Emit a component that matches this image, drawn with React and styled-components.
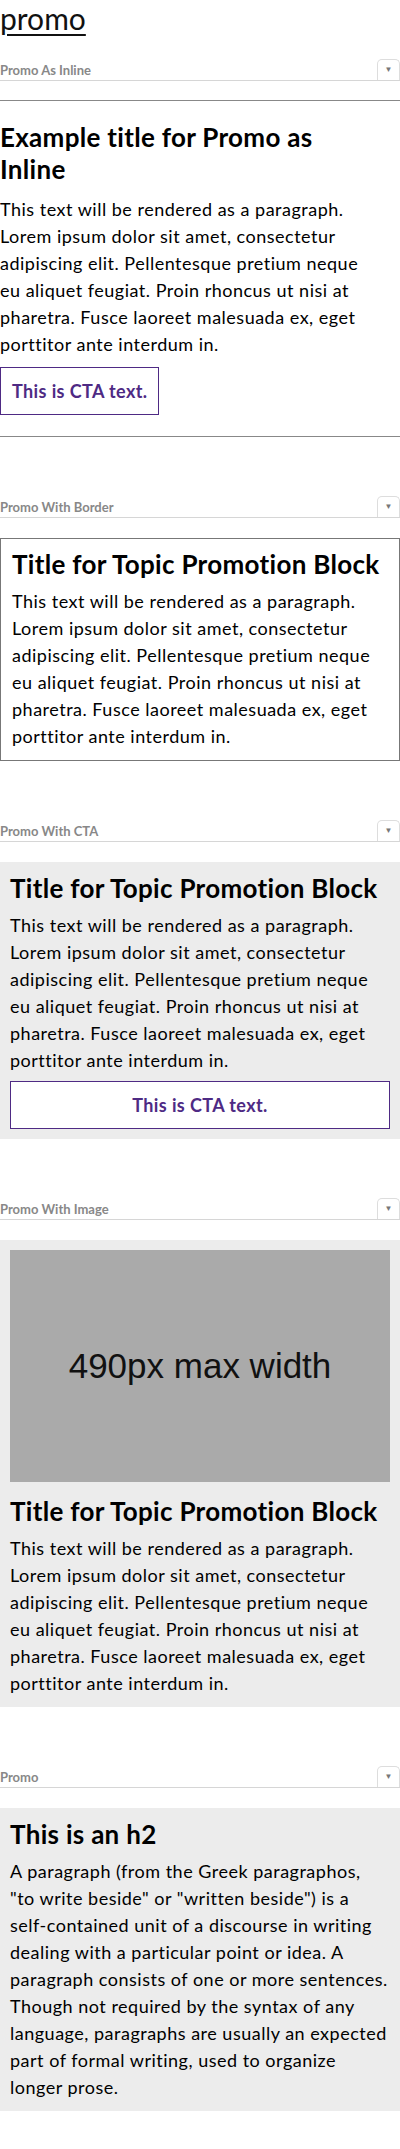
import React from 'react';
import styled, { createGlobalStyle } from 'styled-components';

const GlobalStyle = createGlobalStyle`
  body {
    margin: 0;
    background: #fff;
    font-family: Lato, "Open Sans", sans-serif;
    color: #000;
  }
`;

const Page = styled.div`
  width: 400px;
  padding-bottom: 41px;
`;

const PageTitle = styled.h1`
  margin: 0;
  font-size: 30px;
  font-weight: 400;
  line-height: 37px;

  a {
    color: #111;
    text-decoration: underline;
    text-decoration-thickness: 2px;
    text-underline-offset: 4px;
  }
`;

const Section = styled.section`
  margin-top: ${p => (p.$first ? '22px' : '59px')};
`;

const SectionHeader = styled.div`
  display: flex;
  justify-content: space-between;
  align-items: center;
  height: 21px;
  border-bottom: 1px solid #d6d6d6;
  margin-bottom: 20px;
`;

const SectionLabel = styled.span`
  font-size: 13px;
  font-weight: 700;
  color: #888;
`;

const Toggle = styled.button`
  align-self: flex-end;
  width: 23px;
  height: 21px;
  padding: 0;
  background: #fff;
  border: 1px solid #ddd;
  border-bottom: none;
  border-radius: 5px 5px 0 0;
  color: #777;
  font-size: 8px;
  line-height: 20px;
  cursor: pointer;
`;

const InlinePromo = styled.div`
  margin-top: -1px;
  border-top: 1px solid #888;
  border-bottom: 1px solid #888;
  padding: 20px 20px 21px 0;
`;

const Box = styled.div`
  background: ${p => (p.$gray ? '#ececec' : '#fff')};
  border: ${p => (p.$bordered ? '1px solid #777' : 'none')};
  padding: ${p => (p.$bordered ? '9px 11px 10px' : '10px')};
`;

const Title = styled.h2`
  margin: 0 0 ${p => (p.$inline ? '11px' : '8px')};
  font-size: 26px;
  line-height: 32px;
  letter-spacing: 0.3px;
  font-weight: 700;
`;

const Body = styled.p`
  margin: 0;
  font-size: 18px;
  line-height: 27px;
  letter-spacing: 0.5px;
`;

const Cta = styled.a`
  display: block;
  width: ${p => (p.$full ? 'auto' : 'fit-content')};
  margin-top: ${p => (p.$full ? '7px' : '9px')};
  padding: 10px 11px;
  border: 1px solid #4e2a84;
  background: #fff;
  color: #4e2a84;
  font-size: 18px;
  line-height: 26px;
  letter-spacing: 0.4px;
  font-weight: 700;
  text-align: center;
  text-decoration: none;
`;

const ImagePlaceholder = styled.div`
  display: flex;
  align-items: center;
  justify-content: center;
  height: 232px;
  margin-bottom: 13px;
  background: #aaa;
  font-family: "Liberation Sans", Arial, sans-serif;
  font-size: 35px;
  color: #111;
`;

const lorem =
  'This text will be rendered as a paragraph. Lorem ipsum dolor sit amet, consectetur adipiscing elit. Pellentesque pretium neque eu aliquet feugiat. Proin rhoncus ut nisi at pharetra. Fusce laoreet malesuada ex, eget porttitor ante interdum in.';

const DemoSection = ({ label, first, children }) => (
  <Section $first={first}>
    <SectionHeader>
      <SectionLabel>{label}</SectionLabel>
      <Toggle aria-label="Toggle code">▼</Toggle>
    </SectionHeader>
    {children}
  </Section>
);

export default function App() {
  return (
    <Page>
      <GlobalStyle />
      <PageTitle>
        <a href="#promo">promo</a>
      </PageTitle>

      <DemoSection label="Promo As Inline" first>
        <InlinePromo>
          <Title $inline>Example title for Promo as Inline</Title>
          <Body>{lorem}</Body>
          <Cta href="#cta">This is CTA text.</Cta>
        </InlinePromo>
      </DemoSection>

      <DemoSection label="Promo With Border">
        <Box $bordered>
          <Title>Title for Topic Promotion Block</Title>
          <Body>{lorem}</Body>
        </Box>
      </DemoSection>

      <DemoSection label="Promo With CTA">
        <Box $gray>
          <Title>Title for Topic Promotion Block</Title>
          <Body>{lorem}</Body>
          <Cta href="#cta" $full>This is CTA text.</Cta>
        </Box>
      </DemoSection>

      <DemoSection label="Promo With Image">
        <Box $gray>
          <ImagePlaceholder>490px max width</ImagePlaceholder>
          <Title>Title for Topic Promotion Block</Title>
          <Body>{lorem}</Body>
        </Box>
      </DemoSection>

      <DemoSection label="Promo">
        <Box $gray>
          <Title>This is an h2</Title>
          <Body>
            A paragraph (from the Greek paragraphos, "to write beside" or "written beside") is a
            self-contained unit of a discourse in writing dealing with a particular point or idea. A
            paragraph consists of one or more sentences. Though not required by the syntax of any
            language, paragraphs are usually an expected part of formal writing, used to organize
            longer prose.
          </Body>
        </Box>
      </DemoSection>
    </Page>
  );
}
